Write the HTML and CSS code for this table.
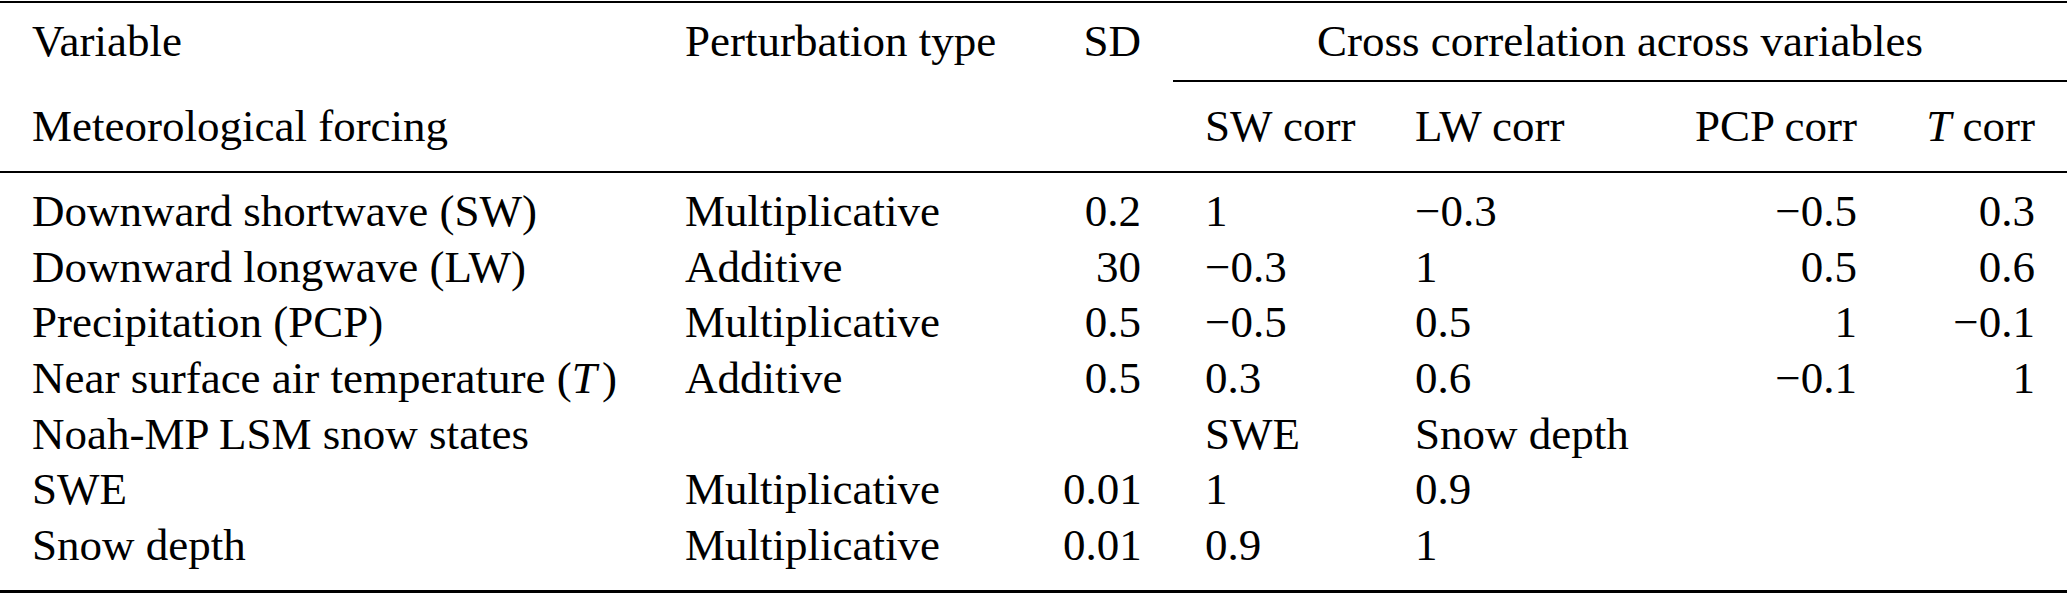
FILE: index.html
```html
<!DOCTYPE html>
<html lang="en">
<head>
<meta charset="utf-8">
<title>Perturbation parameters</title>
<link rel="stylesheet" href="styles.css">
</head>
<body>
<div class="table">
  <div class="row head-a">
    <div class="c">Variable</div>
    <div class="c">Perturbation type</div>
    <div class="c r">SD</div>
    <div class="c span cmid">Cross correlation across variables</div>
  </div>
  <div class="row head-b">
    <div class="c">Meteorological forcing</div>
    <div class="c"></div>
    <div class="c"></div>
    <div class="c">SW corr</div>
    <div class="c">LW corr</div>
    <div class="c r">PCP corr</div>
    <div class="c r"><span class="m">T</span> corr</div>
  </div>
  <div class="body">
    <div class="row">
      <div class="c">Downward shortwave (SW)</div>
      <div class="c">Multiplicative</div>
      <div class="c r">0.2</div>
      <div class="c">1</div>
      <div class="c">−0.3</div>
      <div class="c r">−0.5</div>
      <div class="c r">0.3</div>
    </div>
    <div class="row">
      <div class="c">Downward longwave (LW)</div>
      <div class="c">Additive</div>
      <div class="c r">30</div>
      <div class="c">−0.3</div>
      <div class="c">1</div>
      <div class="c r">0.5</div>
      <div class="c r">0.6</div>
    </div>
    <div class="row">
      <div class="c">Precipitation (PCP)</div>
      <div class="c">Multiplicative</div>
      <div class="c r">0.5</div>
      <div class="c">−0.5</div>
      <div class="c">0.5</div>
      <div class="c r">1</div>
      <div class="c r">−0.1</div>
    </div>
    <div class="row">
      <div class="c">Near surface air temperature (<span class="m mt">T</span>)</div>
      <div class="c">Additive</div>
      <div class="c r">0.5</div>
      <div class="c">0.3</div>
      <div class="c">0.6</div>
      <div class="c r">−0.1</div>
      <div class="c r">1</div>
    </div>
    <div class="row">
      <div class="c">Noah-MP LSM snow states</div>
      <div class="c"></div>
      <div class="c"></div>
      <div class="c">SWE</div>
      <div class="c">Snow depth</div>
      <div class="c"></div>
      <div class="c"></div>
    </div>
    <div class="row">
      <div class="c">SWE</div>
      <div class="c">Multiplicative</div>
      <div class="c r">0.01</div>
      <div class="c">1</div>
      <div class="c">0.9</div>
      <div class="c"></div>
      <div class="c"></div>
    </div>
    <div class="row">
      <div class="c">Snow depth</div>
      <div class="c">Multiplicative</div>
      <div class="c r">0.01</div>
      <div class="c">0.9</div>
      <div class="c">1</div>
      <div class="c"></div>
      <div class="c"></div>
    </div>
  </div>
</div>
</body>
</html>
```

FILE: styles.css
```css
html, body {
  margin: 0;
  padding: 0;
  background: #fff;
}

.table {
  display: flex;
  flex-direction: column;
  width: 2067px;
  margin-top: 1px;
  border-top: 2px solid #000;
  font-family: "Liberation Serif", "Times New Roman", serif;
  font-size: 45px;
  color: #000;
}

.row {
  display: grid;
  grid-template-columns: 653px 378px 142px 210px 274px 232px 178px;
}

.c {
  padding: 0 32px;
  line-height: 55.6px;
  white-space: nowrap;
}

.r {
  text-align: right;
}

.span {
  grid-column: 4 / -1;
  text-align: center;
}

.head-a {
  padding-top: 11px;
}

.cmid {
  padding-bottom: 10px;
  border-bottom: 2px solid #000;
  margin: 0 0 0 0;
}

.head-b {
  padding: 17px 0 17px;
  border-bottom: 2px solid #000;
}

.body {
  display: flex;
  flex-direction: column;
  padding: 11px 0 17px;
  border-bottom: 3px solid #000;
}

.m {
  font-style: italic;
}

.mt {
  margin-right: 0.12em;
}
```
